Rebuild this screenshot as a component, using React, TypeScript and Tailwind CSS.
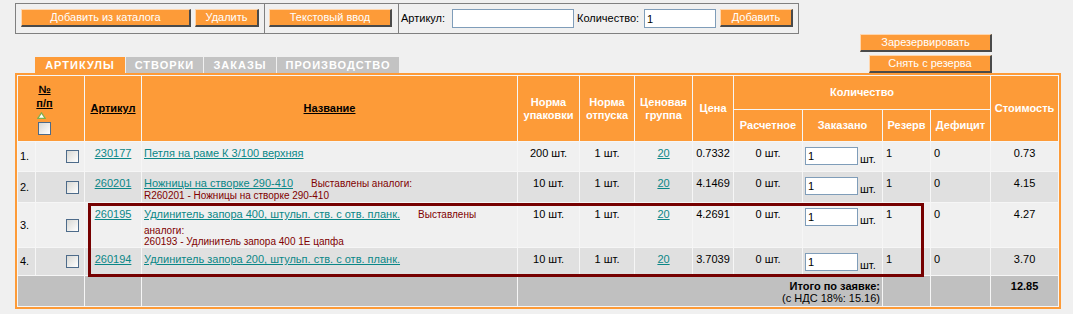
import React from "react";

function Btn({ className = "", children }: { className?: string; children: React.ReactNode }) {
  return (
    <div
      className={`h-[18px] shrink-0 bg-[#fd9b38] text-white text-[11px] leading-[15px] text-center whitespace-nowrap border-t border-l border-t-[#ffd6ad] border-l-[#ffd6ad] border-b-2 border-r-2 border-b-[#4a4a4a] border-r-[#4a4a4a] ${className}`}
    >
      {children}
    </div>
  );
}

function Tab({ className = "", children }: { className?: string; children: React.ReactNode }) {
  return (
    <div className={`h-[16px] text-white font-bold text-[11px] leading-[16px] tracking-[1px] text-center ${className}`}>
      {children}
    </div>
  );
}

function Check() {
  return (
    <span className="inline-block w-[13px] h-[13px] border border-[#4d6b8a] bg-linear-to-br from-[#d8d8d4] to-white align-middle" />
  );
}

const H = "bg-[#fd9b38] text-white font-bold text-[11px] leading-[13px] text-center align-middle px-[1px]";
const D = "px-[2px] pt-[5px] align-top leading-[13px] text-[11px]";
const LINK = "underline text-[#0a8787]";
const RED = "text-[#800000] text-[10px]";

type RowProps = {
  n: string;
  art: string;
  name: React.ReactNode;
  nu: string;
  price: string;
  sum: string;
  bg: string;
  h: string;
};

function DataRow({ n, art, name, nu, price, sum, bg, h }: RowProps) {
  return (
    <tr>
      <td className={`${bg} ${h} pl-[2px] align-middle leading-[13px]`}>{n}</td>
      <td className={`${bg} text-right pr-[5px] align-middle leading-[0]`}>
        <Check />
      </td>
      <td className={`${bg} ${D} text-center`}>
        <a className={LINK}>{art}</a>
      </td>
      <td className={`${bg} ${D}`}>{name}</td>
      <td className={`${bg} ${D} text-center`}>{nu}</td>
      <td className={`${bg} ${D} text-center`}>1 шт.</td>
      <td className={`${bg} ${D} text-center`}>
        <a className={LINK}>20</a>
      </td>
      <td className={`${bg} ${D} text-center`}>{price}</td>
      <td className={`${bg} ${D} text-center`}>0 шт.</td>
      <td className={`${bg} px-[2px] pt-[5px] align-top`}>
        <div className="flex items-end">
          <input
            readOnly
            value="1"
            className="w-[53px] h-[18px] border border-[#7f9db9] bg-white px-[2px] text-[11px] leading-[14px] text-black outline-none font-['Liberation_Sans',Arial,sans-serif]"
          />
          <span className="ml-[2px] leading-[11px]">шт.</span>
        </div>
      </td>
      <td className={`${bg} ${D} pl-[3px]`}>1</td>
      <td className={`${bg} ${D} pl-[3px]`}>0</td>
      <td className={`${bg} ${D} text-center`}>{sum}</td>
    </tr>
  );
}

export default function App() {
  return (
    <div className="w-[1073px] h-[314px] bg-[#f0f0f0] overflow-hidden font-['Liberation_Sans',Arial,sans-serif] text-[11px] text-black">
      {/* toolbar */}
      <div className="flex ml-[15px] pt-[3px]">
        <div className="flex w-[250px] h-[31px] border border-[#808080] pl-[5px] pt-[5px] gap-[4px]">
          <Btn className="w-[170px]">Добавить из каталога</Btn>
          <Btn className="w-[64px]">Удалить</Btn>
        </div>
        <div className="flex w-[134px] h-[31px] border border-l-0 border-[#808080] pl-[4px] pt-[5px]">
          <Btn className="w-[123px]">Текстовый ввод</Btn>
        </div>
        <div className="flex items-start w-[400px] h-[31px] border border-l-0 border-[#808080] pl-[2px] pt-[5px]">
          <span className="w-[51px] mt-[3px] leading-[13px]">Артикул:</span>
          <input
            readOnly
            value=""
            className="w-[122px] h-[19px] border border-[#7f9db9] bg-white px-[2px] text-[11px] outline-none"
          />
          <span className="ml-[3px] w-[67px] mt-[3px] leading-[13px]">Количество:</span>
          <input
            readOnly
            value="1"
            className="w-[72px] h-[19px] border border-[#7f9db9] bg-white px-[2px] text-[11px] text-black outline-none font-['Liberation_Sans',Arial,sans-serif]"
          />
          <Btn className="ml-[4px] w-[73px]">Добавить</Btn>
        </div>
      </div>

      {/* tabs + reserve buttons */}
      <div className="flex items-end h-[39px] ml-[15px] w-[1046px]">
        <div className="flex gap-[1px] ml-[20px]">
          <Tab className="w-[90px] bg-[#fd9b38]">АРТИКУЛЫ</Tab>
          <Tab className="w-[77px] bg-[#c3c3c3]">СТВОРКИ</Tab>
          <Tab className="w-[72px] bg-[#c3c3c3]">ЗАКАЗЫ</Tab>
          <Tab className="w-[122px] bg-[#c3c3c3]">ПРОИЗВОДСТВО</Tab>
        </div>
        <div className="ml-auto mr-[69px] flex flex-col items-end gap-[3px]">
          <Btn className="w-[132px]">Зарезервировать</Btn>
          <Btn className="w-[123px]">Снять с резерва</Btn>
        </div>
      </div>

      {/* table */}
      <div className="relative ml-[15px] w-[1046px]">
        <table className="table-fixed border-separate border-spacing-[1px] border-2 border-[#fd9b38] bg-[#f6f6f6] w-[1046px]">
          <colgroup>
            <col className="w-[17px]" />
            <col className="w-[48px]" />
            <col className="w-[56px]" />
            <col className="w-[375px]" />
            <col className="w-[61px]" />
            <col className="w-[54px]" />
            <col className="w-[57px]" />
            <col className="w-[40px]" />
            <col className="w-[68px]" />
            <col className="w-[79px]" />
            <col className="w-[47px]" />
            <col className="w-[59px]" />
            <col className="w-[67px]" />
          </colgroup>
          <tbody>
            <tr>
              <td colSpan={2} rowSpan={2} className={`${H} pr-[14px]`}>
                <div className="flex flex-col items-center">
                  <span className="underline text-black leading-[13px]">№</span>
                  <span className="underline text-black leading-[12px] mt-[1px]">п/п</span>
                  <svg width="9" height="7" viewBox="0 0 9 7" className="mt-[3px] mr-[6px]">
                    <polygon points="4.5,0.8 8.2,6.3 0.8,6.3" fill="#ffffff" stroke="#7fae4c" strokeWidth="1.2" />
                  </svg>
                  <span className="mt-[3px] leading-[0]">
                    <Check />
                  </span>
                </div>
              </td>
              <td rowSpan={2} className={H}>
                <span className="underline text-black">Артикул</span>
              </td>
              <td rowSpan={2} className={H}>
                <span className="underline text-black">Название</span>
              </td>
              <td rowSpan={2} className={H}>
                Норма
                <br />
                упаковки
              </td>
              <td rowSpan={2} className={H}>
                Норма
                <br />
                отпуска
              </td>
              <td rowSpan={2} className={H}>
                Ценовая
                <br />
                группа
              </td>
              <td rowSpan={2} className={H}>
                Цена
              </td>
              <td colSpan={4} className={`${H} h-[33px]`}>
                Количество
              </td>
              <td rowSpan={2} className={H}>
                Стоимость
              </td>
            </tr>
            <tr>
              <td className={`${H} h-[31px]`}>Расчетное</td>
              <td className={H}>Заказано</td>
              <td className={H}>Резерв</td>
              <td className={H}>Дефицит</td>
            </tr>

            <DataRow
              n="1."
              art="230177"
              name={<a className={LINK}>Петля на раме К 3/100 верхняя</a>}
              nu="200 шт."
              price="0.7332"
              sum="0.73"
              bg="bg-[#f0f0f0]"
              h="h-[29px]"
            />
            <DataRow
              n="2."
              art="260201"
              name={
                <>
                  <div>
                    <a className={LINK}>Ножницы на створке 290-410</a>
                    <span className={`${RED} ml-[18px]`}>Выставлены аналоги:</span>
                  </div>
                  <div className={`${RED} leading-[12px]`}>R260201 - Ножницы на створке 290-410</div>
                </>
              }
              nu="10 шт."
              price="4.1469"
              sum="4.15"
              bg="bg-[#e0e0e0]"
              h="h-[30px]"
            />
            <DataRow
              n="3."
              art="260195"
              name={
                <>
                  <div>
                    <a className={LINK}>Удлинитель запора 400, штульп. ств. с отв. планк.</a>
                    <span className={`${RED} ml-[18px]`}>Выставлены</span>
                  </div>
                  <div className={`${RED} leading-[11px] mt-[4px]`}>аналоги:</div>
                  <div className={`${RED} leading-[11px]`}>260193 - Удлинитель запора 400 1E цапфа</div>
                </>
              }
              nu="10 шт."
              price="4.2691"
              sum="4.27"
              bg="bg-[#f0f0f0]"
              h="h-[44px]"
            />
            <DataRow
              n="4."
              art="260194"
              name={<a className={LINK}>Удлинитель запора 200, штульп. ств. с отв. планк.</a>}
              nu="10 шт."
              price="3.7039"
              sum="3.70"
              bg="bg-[#e0e0e0]"
              h="h-[27px]"
            />

            <tr>
              <td colSpan={2} className="bg-[#c0c0c0] h-[30px]" />
              <td className="bg-[#c0c0c0]" />
              <td className="bg-[#c0c0c0]" />
              <td colSpan={6} className="bg-[#c0c0c0] text-right pr-[2px] pt-[4px] align-top leading-[12px]">
                <div className="font-bold">Итого по заявке:</div>
                <div>(с НДС 18%: 15.16)</div>
              </td>
              <td className="bg-[#c0c0c0]" />
              <td className="bg-[#c0c0c0]" />
              <td className="bg-[#c0c0c0] text-center font-bold pt-[4px] align-top leading-[12px]">12.85</td>
            </tr>
          </tbody>
        </table>
        <div className="absolute left-[73px] top-[130px] w-[836px] h-[74px] border-[3px] border-[#760000] pointer-events-none" />
      </div>
    </div>
  );
}
